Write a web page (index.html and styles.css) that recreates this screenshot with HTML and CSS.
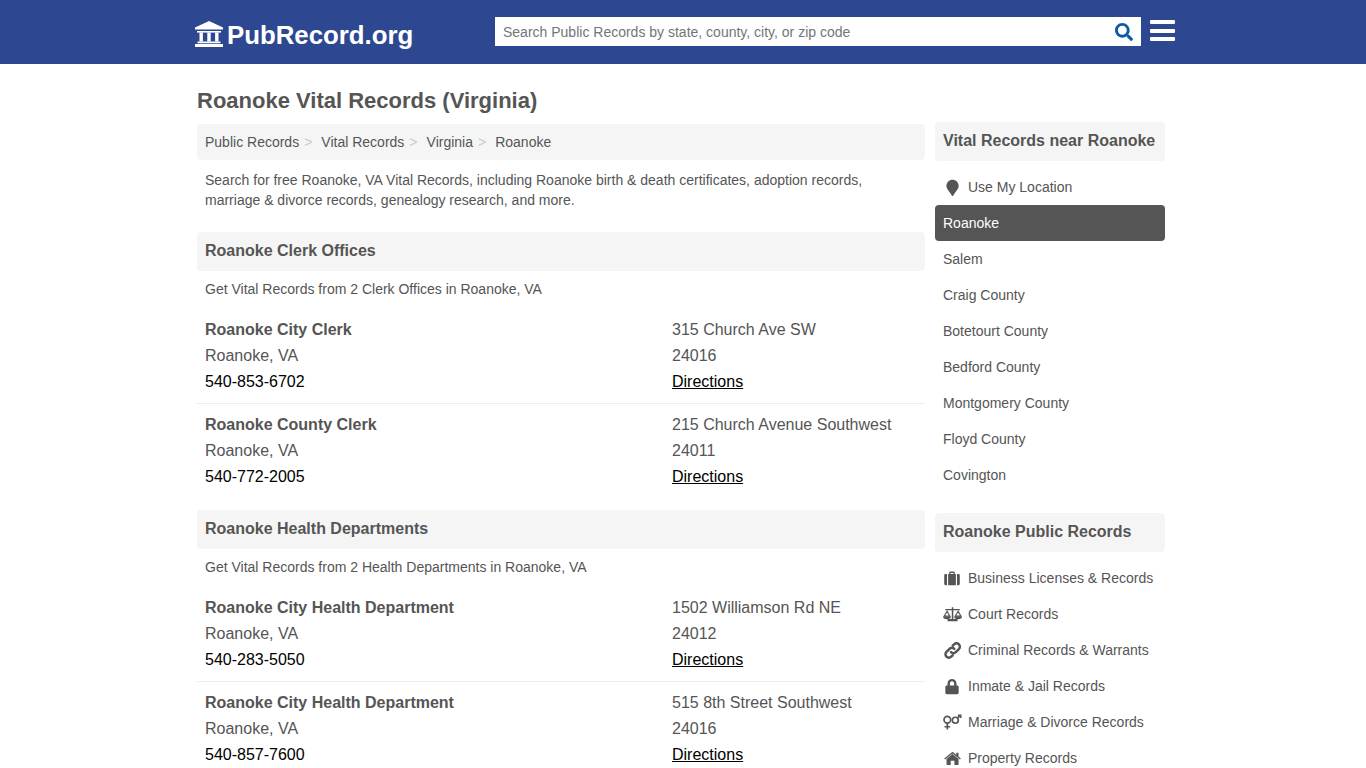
FILE: index.html
```html
<!DOCTYPE html>
<html lang="en">
<head>
<meta charset="utf-8">
<title>Roanoke Vital Records (Virginia)</title>
<link rel="stylesheet" href="styles.css">
</head>
<body>
<header class="topbar">
  <div class="topbar-inner">
    <a class="logo" href="#">
      <svg class="logo-icon" viewBox="0 0 28 26"><path d="M14 0 L28 6.5 V8.500 H0 V6.500 Z"/><path d="M2 10h24v1.600H2z"/><path d="M4.500 11.600h3.400v8.800H4.500zM12.300 11.600h3.400v8.800h-3.400zM20.100 11.600h3.400v8.800h-3.400z"/><path d="M2.500 20.400h23v1.800h-23zM0 23h28v3H0z"/></svg>
      <span class="logo-text">PubRecord.org</span>
    </a>
    <form class="search">
      <span class="search-text">Search Public Records by state, county, city, or zip code</span>
      <svg class="search-icon" viewBox="0 0 512 512"><path d="M505 442.7L405.3 343c-4.500-4.500-10.600-7-17-7H372c27.600-35.300 44-79.700 44-128C416 93.100 322.900 0 208 0S0 93.100 0 208s93.100 208 208 208c48.300 0 92.700-16.400 128-44v16.300c0 6.400 2.500 12.500 7 17l99.700 99.700c9.400 9.400 24.600 9.400 33.900 0l28.300-28.300c9.400-9.400 9.400-24.600.1-34zM208 336c-70.700 0-128-57.200-128-128 0-70.700 57.200-128 128-128 70.700 0 128 57.200 128 128 0 70.700-57.200 128-128 128z"/></svg>
    </form>
    <div class="burger"><i></i><i></i><i></i></div>
  </div>
</header>
<div class="page">
  <main class="main">
    <h1 class="title">Roanoke Vital Records (Virginia)</h1>
    <nav class="crumbs">
      <a href="#">Public Records</a><span class="sep">&gt;</span>
      <a href="#">Vital Records</a><span class="sep">&gt;</span>
      <a href="#">Virginia</a><span class="sep">&gt;</span>
      <a href="#">Roanoke</a>
    </nav>
    <p class="intro">Search for free Roanoke, VA Vital Records, including Roanoke birth &amp; death certificates, adoption records, marriage &amp; divorce records, genealogy research, and more.</p>

    <h2 class="bar">Roanoke Clerk Offices</h2>
    <p class="sub">Get Vital Records from 2 Clerk Offices in Roanoke, VA</p>
    <div class="listing">
      <div><b>Roanoke City Clerk</b><br>Roanoke, VA<br><span class="tel">540-853-6702</span></div>
      <div>315 Church Ave SW<br>24016<br><a class="dir" href="#">Directions</a></div>
    </div>
    <div class="listing last">
      <div><b>Roanoke County Clerk</b><br>Roanoke, VA<br><span class="tel">540-772-2005</span></div>
      <div>215 Church Avenue Southwest<br>24011<br><a class="dir" href="#">Directions</a></div>
    </div>

    <h2 class="bar">Roanoke Health Departments</h2>
    <p class="sub">Get Vital Records from 2 Health Departments in Roanoke, VA</p>
    <div class="listing">
      <div><b>Roanoke City Health Department</b><br>Roanoke, VA<br><span class="tel">540-283-5050</span></div>
      <div>1502 Williamson Rd NE<br>24012<br><a class="dir" href="#">Directions</a></div>
    </div>
    <div class="listing last">
      <div><b>Roanoke City Health Department</b><br>Roanoke, VA<br><span class="tel">540-857-7600</span></div>
      <div>515 8th Street Southwest<br>24016<br><a class="dir" href="#">Directions</a></div>
    </div>
  </main>

  <aside class="side">
    <h2 class="bar side-bar">Vital Records near Roanoke</h2>
    <ul class="links">
      <li><a href="#" class="ico"><svg viewBox="0 0 18 15"><path transform="translate(4 .5) scale(.0286)" d="M172.268 501.670C26.970 291.031 0 269.413 0 192 0 85.961 85.961 0 192 0s192 85.961 192 192c0 77.413-26.970 99.031-172.268 309.670-9.535 13.774-29.930 13.773-39.464 0z"/></svg>Use My Location</a></li>
      <li><a href="#" class="active">Roanoke</a></li>
      <li><a href="#">Salem</a></li>
      <li><a href="#">Craig County</a></li>
      <li><a href="#">Botetourt County</a></li>
      <li><a href="#">Bedford County</a></li>
      <li><a href="#">Montgomery County</a></li>
      <li><a href="#">Floyd County</a></li>
      <li><a href="#">Covington</a></li>
    </ul>
    <h2 class="bar side-bar second">Roanoke Public Records</h2>
    <ul class="links">
      <li><a href="#" class="ico"><svg viewBox="0 0 18 15"><path d="M3 3.500h1.500v10H3a1 1 0 0 1-1-1v-8a1 1 0 0 1 1-1zM15 3.500h-1.500v10H15a1 1 0 0 0 1-1v-8a1 1 0 0 0-1-1zM5.500 3.500H6.500V2.300a1 1 0 0 1 1-1h3a1 1 0 0 1 1 1v1.200h1v10h-7zM7.700 3.500h2.600V2.500H7.700z" fill-rule="evenodd"/></svg>Business Licenses &amp; Records</a></li>
      <li><a href="#" class="ico"><svg viewBox="0 0 18 15"><path d="M8.800 1h1.400v1.500h5.800v1.200h-5.800v7.800h3.800v2H5v-2h3.800V3.700H3V2.500h5.800z"/><path d="M4.500 4.500 L1.900 9H7.100Z M14.500 4.500 L11.900 9H17.100Z" fill="none" stroke="currentColor" stroke-width="1"/><path d="M1 9.300h7a3.500 2.400 0 0 1-7 0zM11 9.300h7a3.500 2.400 0 0 1-7 0z"/></svg>Court Records</a></li>
      <li><a href="#" class="ico"><svg viewBox="0 0 18 15"><path transform="translate(1.600 -.5)" d="M6.500 9.500a3 3 0 0 0 4.300 0l2.800-2.800a3 3 0 0 0-4.300-4.300L8 3.700M9.500 6.500a3 3 0 0 0-4.300 0L2.400 9.300a3 3 0 0 0 4.300 4.300L8 12.300" fill="none" stroke="currentColor" stroke-width="2.200" stroke-linecap="round"/></svg>Criminal Records &amp; Warrants</a></li>
      <li><a href="#" class="ico"><svg viewBox="0 0 18 15"><path transform="translate(3 .65) scale(.0268)" d="M400 224h-24v-72C376 68.200 307.800 0 224 0S72 68.200 72 152v72H48c-26.500 0-48 21.500-48 48v192c0 26.500 21.500 48 48 48h352c26.500 0 48-21.500 48-48V272c0-26.500-21.500-48-48-48zm-104 0H152v-72c0-39.700 32.300-72 72-72s72 32.300 72 72v72z"/></svg>Inmate &amp; Jail Records</a></li>
      <li><a href="#" class="ico"><svg viewBox="0 0 18 15"><g fill="none" stroke="currentColor" stroke-width="1.500"><circle cx="4.800" cy="5" r="3"/><path d="M4.800 8v5.800M2.300 11.300h5"/><circle cx="12" cy="5.500" r="2.700"/><path d="M13.900 3.600 16.500 1M14.300 1H16.800V3.500"/></g></svg>Marriage &amp; Divorce Records</a></li>
      <li><a href="#" class="ico"><svg viewBox="0 0 18 15"><g transform="translate(2 1.500) scale(.833 .8)"><path d="M9 2.400 15.500 8v6a.700.700 0 0 1-.700.700H11V10H7v4.700H3.200a.700.700 0 0 1-.700-.700V8z"/><path d="M9 0 13 3.300V1h2.400v4.300L18 7.500l-.900 1.100L9 1.900.900 8.600 0 7.500z"/></g></svg>Property Records</a></li>
    </ul>
  </aside>
</div>
</body>
</html>
```

FILE: styles.css
```css
* { box-sizing: border-box; }
body {
  margin: 0;
  font-family: "Liberation Sans", Arial, sans-serif;
  color: #555;
  background: #fff;
  font-size: 14px;
}
a { color: inherit; text-decoration: none; }

.topbar { background: #2e4791; height: 64px; }
.topbar-inner {
  width: 986px;
  margin: 0 auto;
  height: 64px;
  display: flex;
  align-items: flex-start;
  padding-left: 5px;
}
.logo {
  display: flex;
  align-items: flex-start;
  flex: none;
  width: 300px;
  height: 64px;
  color: #fff;
  font-weight: 700;
  font-size: 25.8px;
}
.logo-icon { width: 28px; height: 26px; fill: #fff; margin: 21px 4px 0 0; }
.logo-text { margin-top: 20px; line-height: 30px; }
.search {
  flex: none;
  width: 646px;
  height: 29px;
  margin-top: 17px;
  background: #fff;
  display: flex;
  align-items: center;
  justify-content: space-between;
  padding: 0 8px;
}
.search-text { color: #757575; font-size: 14px; }
.search-icon { width: 18px; height: 18px; fill: #0d5aa7; }
.burger { flex: none; width: 25px; margin: 20px 0 0 9px; display: flex; flex-direction: column; gap: 4.5px; }
.burger i { display: block; height: 4px; background: #fff; border-radius: 1px; }

.page {
  width: 972px;
  padding-right: 4px;
  margin: 0 auto;
  display: flex;
  gap: 10px;
  align-items: flex-start;
}
.main { width: 728px; }
.side { width: 230px; padding-top: 58px; }

.title {
  margin: 0;
  padding-top: 23px;
  height: 60px;
  font-size: 22px;
  line-height: 27px;
  font-weight: 700;
  color: #555;
}
.crumbs {
  background: #f5f5f5;
  border-radius: 4px;
  height: 36px;
  display: flex;
  align-items: center;
  padding: 0 8px;
}
.sep { color: #ccc; margin: 0 9px 0 5px; }
.intro { margin: 0; padding: 10px 8px 22px; line-height: 20px; }

.bar {
  margin: 0;
  background: #f5f5f5;
  border-radius: 4px;
  height: 39px;
  line-height: 38px;
  padding: 0 8px;
  font-size: 16px;
  font-weight: 700;
  color: #555;
}
.sub { margin: 0; padding: 8px 8px 0; height: 46px; line-height: 20px; }
.listing {
  display: grid;
  grid-template-columns: 467px 1fr;
  font-size: 16px;
  line-height: 26px;
  padding: 0 8px 8px;
  border-bottom: 1px solid #eee;
  margin-bottom: 8px;
}
.listing.last { border-bottom: 0; margin-bottom: 12px; }
.tel { color: #000; }
.dir { color: #000; text-decoration: underline; }

.side-bar { font-size: 16px; }
.side-bar.second { margin-top: 20px; }
.links { list-style: none; margin: 8px 0 0; padding: 0; }
.links a {
  display: flex;
  align-items: center;
  height: 36px;
  padding: 0 8px;
  border-radius: 4px;
}
.links a.active { background: #555; color: #fff; }
.links svg {
  width: 20px;
  height: 17px;
  margin: 0 6px 0 -1px;
  fill: currentColor;
  flex: none;
}
```
